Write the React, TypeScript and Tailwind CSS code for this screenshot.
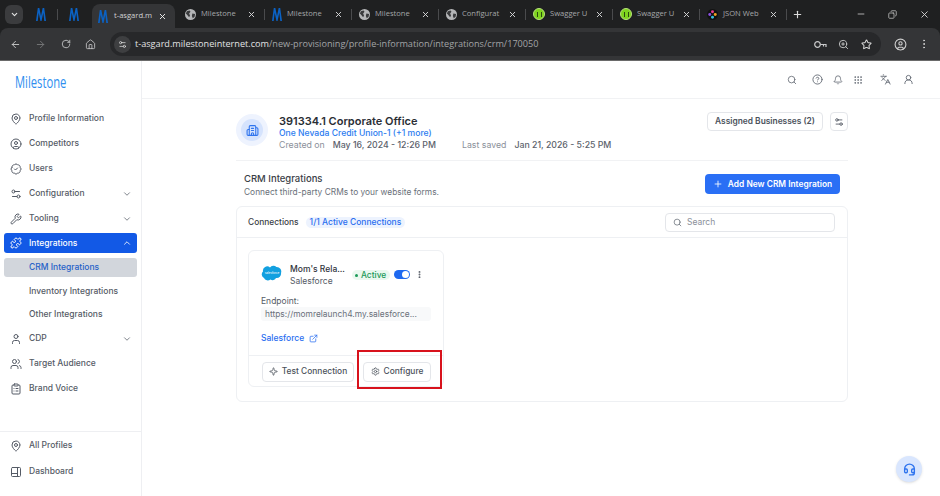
import {
  ArrowLeft,
  ArrowRight,
  BadgeCheck,
  Bell,
  Building2,
  ChevronDown,
  ChevronUp,
  CircleHelp,
  CircleUser,
  ClipboardList,
  Copy,
  ExternalLink,
  Grip,
  Headset,
  House,
  Languages,
  MapPin,
  Minus,
  MoreVertical,
  PanelsRightBottom,
  Plus,
  Puzzle,
  RotateCw,
  Search,
  Settings,
  Settings2,
  Sparkle,
  Star,
  User,
  UserRound,
  Users,
  Wrench,
  X,
  ZoomIn,
} from "lucide-react";
import type { ReactNode } from "react";

function BrandM() {
  return (
    <svg width="10" height="13" viewBox="0 0 14 14" preserveAspectRatio="none" className="shrink-0">
      <path d="M0 14 2.5 0h2.2L7 8.5 9.3 0h2.2L14 14h-2.4L10.2 5 7.8 14H6.2L3.8 5 2.4 14z" fill="#0b62c4" />
    </svg>
  );
}

function GlobeIcon() {
  return (
    <svg width="11" height="11" viewBox="0 0 12 12" className="shrink-0">
      <circle cx="6" cy="6" r="6" fill="#b5b6b8" />
      <path d="M2 2.5 5 1.5 6 3 4.5 5 5.5 7 4.5 9 2.5 6.5 1 5zM8 5l3 .5-.5 3L8.5 10 7.5 7.5z" fill="#3a3b3d" />
    </svg>
  );
}

function SwaggerIcon() {
  return (
    <div className="w-[12px] h-[12px] rounded-full bg-[#7fd31f] flex items-center justify-center shrink-0 border border-[#b7e27a]">
      <div className="w-[5px] h-[5px] border-x border-[#2c4a10]" />
    </div>
  );
}

function JsonIcon() {
  return (
    <svg width="11" height="11" viewBox="0 0 12 12" className="shrink-0">
      <circle cx="6" cy="6" r="6" fill="#111" />
      <circle cx="6" cy="3" r="1.6" fill="#e83e8c" />
      <circle cx="9" cy="6" r="1.6" fill="#f0a020" />
      <circle cx="6" cy="9" r="1.6" fill="#38c0e0" />
      <circle cx="3" cy="6" r="1.6" fill="#8a50e0" />
    </svg>
  );
}

function KeyIcon() {
  return (
    <svg width="13" height="9" viewBox="0 0 13 9" fill="none" stroke="#c9cacb" strokeWidth="1.2" className="ml-auto shrink-0">
      <circle cx="3.5" cy="4.5" r="2.8" />
      <path d="M6.3 4.5h5.7v2.5M9.5 4.5v2" />
    </svg>
  );
}

function Tab({ icon, title }: { icon: ReactNode; title: string }) {
  return (
    <div className="w-[87px] h-[28px] shrink-0 flex items-center pl-[2px] pr-[5px]">
      {icon}
      <span className="ml-[5px] whitespace-nowrap text-[7.6px] text-[#a5a7a9]">{title}</span>
      <X size={9} strokeWidth={2.5} className="ml-auto text-[#d8d9da]" />
      <div className="ml-[8px] w-px h-[11px] bg-[#4a4b4d]" />
    </div>
  );
}

function ChromeBar() {
  return (
    <div className="h-[61px] bg-[#1f2021] border-b border-[#6a6a6a] font-['Open_Sans',sans-serif]">
      <div className="h-[28px] flex items-center">
        <div className="ml-[5px] w-[18px] h-[19px] rounded-[6px] bg-[#3b3c3e] flex items-center justify-center">
          <ChevronDown size={9} strokeWidth={3} className="text-[#e5e5e5]" />
        </div>
        <div className="ml-[12px] w-[12px] flex justify-center"><BrandM /></div>
        <div className="ml-[10px] w-px h-[11px] bg-[#4a4b4d]" />
        <div className="ml-[10px] w-[12px] flex justify-center"><BrandM /></div>
        <div className="ml-[12px] mt-[4px] w-[83px] h-[24px] rounded-t-[8px] bg-[#343537] flex items-center pl-[6px] pr-[8px]">
          <BrandM />
          <span className="ml-[6px] whitespace-nowrap text-[7.6px] text-[#d2d3d4]">t-asgard.m</span>
          <X size={9} strokeWidth={2.5} className="ml-auto text-[#f0f0f0]" />
        </div>
        <div className="ml-[8px] flex">
          <Tab icon={<GlobeIcon />} title="Milestone" />
          <Tab icon={<BrandM />} title="Milestone" />
          <Tab icon={<GlobeIcon />} title="Milestone" />
          <Tab icon={<GlobeIcon />} title="Configurat" />
          <Tab icon={<SwaggerIcon />} title="Swagger U" />
          <Tab icon={<SwaggerIcon />} title="Swagger U" />
          <Tab icon={<JsonIcon />} title="JSON Web" />
        </div>
        <Plus size={11} strokeWidth={2.5} className="text-[#dcdcdc]" />
        <Minus size={10} className="ml-[53px] text-[#c8c8c8]" />
        <Copy size={9} className="ml-[22px] text-[#c8c8c8] -scale-x-100" />
        <X size={11} className="ml-[22px] text-[#d8d8d8]" />
      </div>
      <div className="h-[32px] bg-[#343537] rounded-t-[8px] flex items-center">
        <ArrowLeft size={11} strokeWidth={2} className="ml-[10px] text-[#c9cacb]" />
        <ArrowRight size={11} strokeWidth={2} className="ml-[14px] text-[#77787a]" />
        <RotateCw size={10} strokeWidth={2} className="ml-[15px] text-[#c9cacb]" />
        <House size={11} strokeWidth={1.8} className="ml-[14px] text-[#c9cacb]" />
        <div className="ml-[14px] w-[771px] shrink-0 h-[24px] rounded-full bg-[#27282a] flex items-center pl-[4px] pr-[9px]">
          <div className="w-[17px] h-[17px] rounded-full bg-[#3e3f41] flex items-center justify-center">
            <Settings2 size={9} className="text-[#dedede]" />
          </div>
          <span className="ml-[4px] text-[9.15px] text-[#a2a4a6]">
            <span className="text-[#e2e3e4]">t-asgard.milestoneinternet.com</span>
            /new-provisioning/profile-information/integrations/crm/170050
          </span>
          <KeyIcon />
          <ZoomIn size={11} className="ml-[11px] text-[#c9cacb]" />
          <Star size={11} strokeWidth={2.2} className="ml-[12px] text-[#d8d8d8]" />
        </div>
        <CircleUser size={13} className="ml-[13px] text-[#d0d0d0]" />
        <MoreVertical size={12} className="ml-[11px] text-[#d0d0d0]" />
      </div>
    </div>
  );
}

function NavItem({
  icon,
  label,
  chevron,
  active,
  className = "h-[25px]",
}: {
  icon: ReactNode;
  label: string;
  chevron?: boolean;
  active?: boolean;
  className?: string;
}) {
  return (
    <div
      className={`mx-[4px] flex items-center pl-[6px] pr-[5px] rounded-[3px] text-[8.5px] font-medium ${className} ${
        active ? "bg-[#1259e6] text-white" : "text-[#555b66]"
      }`}
    >
      <span className="w-[12px] flex justify-center">{icon}</span>
      <span className="ml-[7px]">{label}</span>
      {chevron && (active ? (
        <ChevronUp size={10} className="ml-auto" />
      ) : (
        <ChevronDown size={10} className="ml-auto text-[#666c76]" />
      ))}
    </div>
  );
}

function Sidebar() {
  return (
    <div className="w-[142px] shrink-0 border-r border-[#eeeff2] flex flex-col">
      <div className="h-[45px] pl-[15px] pt-[10px] text-[17px] leading-[22px] text-[#2f8fef] font-['Open_Sans',sans-serif]">
        <span className="inline-block origin-left scale-x-[0.66]">Milestone</span>
      </div>
      <NavItem icon={<MapPin size={12} />} label="Profile Information" />
      <NavItem icon={<CircleUser size={12} />} label="Competitors" />
      <NavItem icon={<BadgeCheck size={12} />} label="Users" />
      <NavItem icon={<Settings2 size={12} />} label="Configuration" chevron />
      <NavItem icon={<Wrench size={12} />} label="Tooling" chevron />
      <NavItem icon={<Puzzle size={12} />} label="Integrations" chevron active className="h-[20px] mt-[2px]" />
      <div className="mx-[4px] mt-[5px] h-[19px] rounded-[3px] bg-[#d2d6dc] pl-[25px] flex items-center text-[8.5px] font-medium text-[#2662c8]">
        CRM Integrations
      </div>
      <div className="h-[23px] mt-[3px] pl-[29px] flex items-center text-[8.5px] font-medium text-[#555b66]">Inventory Integrations</div>
      <div className="h-[23px] pl-[29px] flex items-center text-[8.5px] font-medium text-[#555b66]">Other Integrations</div>
      <NavItem icon={<User size={12} />} label="CDP" chevron />
      <NavItem icon={<Users size={12} />} label="Target Audience" />
      <NavItem icon={<ClipboardList size={12} />} label="Brand Voice" />
      <div className="mt-auto mb-[11px] border-t border-[#eeeff2] pt-[1px]">
        <NavItem icon={<MapPin size={12} />} label="All Profiles" />
        <NavItem icon={<PanelsRightBottom size={12} />} label="Dashboard" className="h-[27px]" />
      </div>
    </div>
  );
}

function TopIcons() {
  return (
    <div className="h-[38px] border-b border-[#f1f2f4] flex items-center justify-end pr-[26px] text-[#666c76]">
      <Search size={10} />
      <CircleHelp size={11} className="ml-[15px]" />
      <Bell size={10} className="ml-[10px]" />
      <Grip size={10} className="ml-[10px]" />
      <Languages size={11} className="ml-[17px]" />
      <UserRound size={11} className="ml-[12px]" />
    </div>
  );
}

function ConnectionCard() {
  return (
    <div className="relative w-[196px] h-[137px] ml-[11px] mt-[12px] rounded-[6px] border border-[#eef0f3] flex flex-col">
      <div className="flex items-start pl-[12px] pr-[4px] pt-[12px]">
        <svg width="22" height="16" viewBox="0 0 22 16" className="mt-[2px] shrink-0">
          <path d="M9 2.6A4 4 0 0 1 15.4 2 4.5 4.5 0 0 1 20 8a4.3 4.3 0 0 1-5 5 3.6 3.6 0 0 1-5.6 1.4A4 4 0 0 1 3 13 4 4 0 0 1 2 6.5 4.2 4.2 0 0 1 9 2.6z" fill="#12a0e0" />
          <text x="11" y="9" textAnchor="middle" fontSize="3" fill="#fff">salesforce</text>
        </svg>
        <div className="ml-[7px] text-[8.5px] leading-[12px]">
          <div className="w-[53px] whitespace-nowrap font-medium text-[#30343c]">Mom's Rela...</div>
          <div className="text-[#555b66]">Salesforce</div>
        </div>
        <div className="ml-[9px] mt-[7px] w-[38px] h-[10px] rounded-full bg-[#eaf8ef] text-[8.4px] leading-[10px] font-medium text-[#1b9a58] flex items-center">
          <span className="w-[3px] h-[3px] rounded-full bg-[#1b9a58] ml-[3px] mr-[3px]" />
          Active
        </div>
        <div className="ml-[4px] mt-[7px] w-[16px] h-[9px] rounded-full bg-[#1f69f0] flex items-center justify-end pr-[1px]">
          <span className="w-[7px] h-[7px] rounded-full bg-white" />
        </div>
        <MoreVertical size={9} strokeWidth={3} className="ml-[5px] mt-[7px] text-[#555b66]" />
      </div>
      <div className="ml-[12px] mt-[8px] text-[8.5px] leading-[12px] text-[#555b66]">Endpoint:</div>
      <div className="mx-[12px] h-[14px] rounded-[3px] bg-[#f8f9fa] pl-[4px] flex items-center text-[8.4px] text-[#6a707a] whitespace-nowrap">
        https://momrelaunch4.my.salesforce...
      </div>
      <div className="ml-[12px] mt-[11px] flex items-center text-[8.5px] font-medium text-[#2a6ef0]">
        Salesforce
        <ExternalLink size={9} className="ml-[5px]" />
      </div>
      <div className="mt-auto h-[31px] border-t border-[#eef0f3] flex items-center pt-[1px] pl-[13px] gap-[9px]">
        <button className="w-[92px] h-[20px] rounded-[4px] border border-[#e4e6ea] flex items-center justify-center text-[8.4px] font-medium text-[#4b515b]">
          <Sparkle size={9} className="mr-[4px]" />
          Test Connection
        </button>
        <button className="w-[68px] h-[20px] rounded-[4px] border border-[#e4e6ea] flex items-center justify-center text-[8.4px] font-medium text-[#4b515b]">
          <Settings size={9} className="mr-[4px]" />
          Configure
        </button>
      </div>
      <div className="absolute left-[108px] top-[99px] w-[85px] h-[39px] border-2 border-[#d8121c]" />
    </div>
  );
}

function Main() {
  return (
    <div className="flex-1 relative min-w-0">
      <TopIcons />
      <div className="ml-[94px] w-[612px]">
        <div className="h-[62px] border-b border-[#f1f2f4] flex items-start pt-[15px]">
          <div className="w-[32px] h-[32px] rounded-full bg-[#eef3fe] flex items-center justify-center">
            <div className="w-[22px] h-[22px] rounded-full bg-[#d5e3fd] flex items-center justify-center">
              <Building2 size={13} className="text-[#2f74ee]" />
            </div>
          </div>
          <div className="ml-[11px]">
            <div className="text-[11px] leading-[14px] font-semibold text-[#2a2e35]">391334.1 Corporate Office</div>
            <div className="text-[8.6px] leading-[11px] font-medium text-[#2b7cf0]">One Nevada Credit Union-1 (+1 more)</div>
            <div className="text-[8.75px] leading-[11px] mt-[1px] text-[#8b909a] flex">
              <span>Created on</span>
              <span className="ml-[8px] font-medium text-[#5c626c]">May 16, 2024 - 12:26 PM</span>
              <span className="ml-[26px]">Last saved</span>
              <span className="ml-[8px] font-medium text-[#5c626c]">Jan 21, 2026 - 5:25 PM</span>
            </div>
          </div>
          <button className="ml-auto mt-[-2px] w-[116px] h-[19px] rounded-[4px] border border-[#e4e6ea] text-[8.4px] font-semibold text-[#4b515b]">
            Assigned Businesses (2)
          </button>
          <button className="ml-[7px] mt-[-2px] w-[18px] h-[19px] rounded-[4px] border border-[#e4e6ea] flex items-center justify-center">
            <Settings2 size={10} className="text-[#4b515b]" />
          </button>
        </div>
        <div className="h-[45px] flex items-start pl-[8px] pr-[8px] pt-[11px]">
          <div>
            <div className="text-[9.5px] leading-[13px] font-medium text-[#3a3e46]">CRM Integrations</div>
            <div className="text-[8.4px] leading-[14px] text-[#6a707a]">Connect third-party CRMs to your website forms.</div>
          </div>
          <button className="ml-auto mt-[2px] w-[135px] h-[20px] rounded-[4px] bg-[#2a6ff5] flex items-center justify-center text-[8.4px] font-semibold text-white">
            <Plus size={10} className="mr-[5px]" />
            Add New CRM Integration
          </button>
        </div>
        <div className="h-[196px] rounded-[6px] border border-[#eef0f3]">
          <div className="h-[31px] border-b border-[#eef0f3] flex items-center pl-[11px] pr-[12px]">
            <span className="text-[8.4px] font-medium text-[#3a3e46]">Connections</span>
            <span className="ml-[7px] h-[11px] rounded-full px-[4px] bg-[#edf3fe] text-[8.5px] leading-[11px] font-medium text-[#2a6ef0]">
              1/1 Active Connections
            </span>
            <div className="ml-auto w-[170px] h-[19px] rounded-[4px] border border-[#e4e6ea] flex items-center pl-[7px] text-[8.5px] text-[#8b909a]">
              <Search size={9} className="mr-[5px] text-[#666c76]" />
              Search
            </div>
          </div>
          <ConnectionCard />
        </div>
      </div>
      <div className="absolute right-[18px] bottom-[14px] w-[26px] h-[26px] rounded-full bg-[#d9e6fe] shadow-sm flex items-center justify-center">
        <Headset size={13} strokeWidth={2.5} className="text-[#2f74ee]" />
      </div>
    </div>
  );
}

export default function App() {
  return (
    <div className="w-[940px] h-[496px] overflow-hidden bg-white font-['Inter',sans-serif] flex flex-col">
      <ChromeBar />
      <div className="flex-1 flex min-h-0">
        <Sidebar />
        <Main />
      </div>
    </div>
  );
}
